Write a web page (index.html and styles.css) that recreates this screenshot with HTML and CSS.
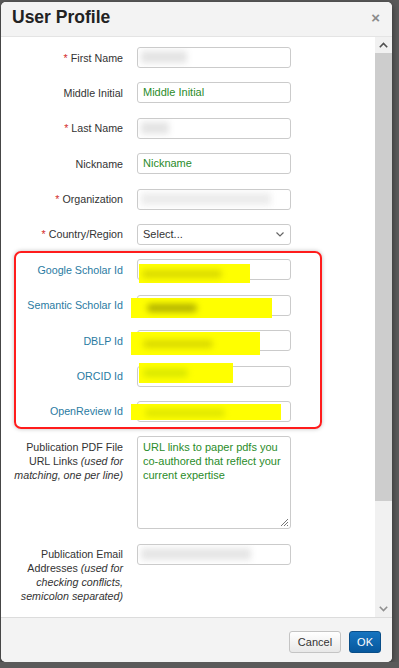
FILE: index.html
```html
<!DOCTYPE html>
<html>

<head>
    <meta charset="utf-8">
    <title>User Profile</title>
    <link rel="stylesheet" href="styles.css">
</head>

<body>
    <div class="backdrop">
        <div class="modal">
            <div class="modal-header">
                <h3 class="modal-title">User Profile</h3>
                <span class="close">&times;</span>
            </div>

            <div class="modal-body">
                <div class="scroll-content">
                    <form class="profile-form">
                        <div class="row">
                            <label class="req">First Name</label>
                            <div class="input"><span class="blur blur-first"></span></div>
                        </div>
                        <div class="row">
                            <label>Middle Initial</label>
                            <div class="input"><span class="hint">Middle Initial</span></div>
                        </div>
                        <div class="row">
                            <label class="req">Last Name</label>
                            <div class="input"><span class="blur blur-last"></span></div>
                        </div>
                        <div class="row">
                            <label>Nickname</label>
                            <div class="input"><span class="hint">Nickname</span></div>
                        </div>
                        <div class="row">
                            <label class="req">Organization</label>
                            <div class="input"><span class="blur blur-org"></span></div>
                        </div>
                        <div class="row">
                            <label class="req">Country/Region</label>
                            <div class="input select">
                                <span>Select...</span>
                                <svg class="caret" width="8" height="5" viewBox="0 0 8 5"><polyline points="0.5,0.5 4,4 7.5,0.5" fill="none" stroke="#666" stroke-width="1.2"/></svg>
                            </div>
                        </div>

                        <!-- ids, marked in red -->
                        <div class="id-group">
                            <div class="row">
                                <label class="ext">Google Scholar Id</label>
                                <div class="cell">
                                    <div class="input"></div>
                                    <span class="hl hl-google"><span class="hl-blur hl-blur-google"></span></span>
                                </div>
                            </div>
                            <div class="row">
                                <label class="ext">Semantic Scholar Id</label>
                                <div class="cell">
                                    <div class="input"></div>
                                    <span class="hl hl-semantic"><span class="hl-blur hl-blur-semantic"></span></span>
                                </div>
                            </div>
                            <div class="row">
                                <label class="ext">DBLP Id</label>
                                <div class="cell">
                                    <div class="input"></div>
                                    <span class="hl hl-dblp"><span class="hl-blur hl-blur-dblp"></span></span>
                                </div>
                            </div>
                            <div class="row">
                                <label class="ext">ORCID Id</label>
                                <div class="cell">
                                    <div class="input"></div>
                                    <span class="hl hl-orcid"><span class="hl-blur hl-blur-orcid"></span></span>
                                </div>
                            </div>
                            <div class="row">
                                <label class="ext">OpenReview Id</label>
                                <div class="cell">
                                    <div class="input"></div>
                                    <span class="hl hl-openreview"><span class="hl-blur hl-blur-openreview"></span></span>
                                </div>
                            </div>
                        </div>

                        <div class="row">
                            <label>Publication PDF File<br>URL Links <i>(used for</i><br><i>matching, one per line)</i></label>
                            <div class="input textarea">
                                <span class="hint">URL links to paper pdfs you co-authored that reflect your current expertise</span>
                                <svg class="grip" width="10" height="10" viewBox="0 0 10 10"><path d="M9 2 L2 9 M9 5 L5 9 M9 8 L8 9" stroke="#777" stroke-width="1"/></svg>
                            </div>
                        </div>
                        <div class="row">
                            <label>Publication Email<br>Addresses <i>(used for</i><br><i>checking conflicts,</i><br><i>semicolon separated)</i></label>
                            <div class="input"><span class="blur blur-email"></span></div>
                        </div>
                    </form>
                </div>

                <div class="scrollbar">
                    <div class="sb-arrow">
                        <svg width="9" height="6" viewBox="0 0 9 6"><polyline points="0.8,5.2 4.5,1.5 8.2,5.2" fill="none" stroke="#505050" stroke-width="1.6"/></svg>
                    </div>
                    <div class="sb-thumb"></div>
                    <div class="sb-track"></div>
                    <div class="sb-arrow">
                        <svg width="9" height="6" viewBox="0 0 9 6"><polyline points="0.8,0.8 4.5,4.5 8.2,0.8" fill="none" stroke="#909090" stroke-width="1.6"/></svg>
                    </div>
                </div>
            </div>

            <div class="modal-footer">
                <button class="btn" type="button">Cancel</button>
                <button class="btn btn-primary" type="button">OK</button>
            </div>
        </div>
    </div>
</body>

</html>
```

FILE: styles.css
```css
body {
    margin: 0;
    background: #5a5a5a;
    font-family: "Liberation Sans", Arial, sans-serif;
    font-size: 11px;
    color: #333;
}

.backdrop {
    padding: 2px 0 0 1px;
}

.modal {
    width: 391px;
    height: 660px;
    background: #fff;
    border-radius: 5px;
    box-shadow: 0 2px 6px rgba(0, 0, 0, 0.5);
    display: flex;
    flex-direction: column;
    overflow: hidden;
}

.modal-header {
    height: 34px;
    flex: none;
    background: #f3f3f3;
    border-bottom: 1px solid #e4e4e4;
    display: flex;
    align-items: center;
    justify-content: space-between;
    padding: 0 11px 0 11px;
}

.modal-title {
    margin: 0 0 3px 0;
    font-size: 17.5px;
    font-weight: bold;
    color: #222;
}

.close {
    font-size: 15px;
    font-weight: bold;
    color: #8a8a8a;
    margin: 0 1px 3px 0;
}

.modal-body {
    flex: 1;
    min-height: 0;
    display: flex;
}

.scroll-content {
    flex: 1;
    overflow: hidden;
    padding-top: 10px;
}

/* form rows */
.row {
    display: grid;
    grid-template-columns: 119px 154px;
    column-gap: 14px;
    align-items: start;
    padding-left: 3px;
    margin-bottom: 14.4px;
}

.row label {
    text-align: right;
    font-size: 10.7px;
    line-height: 14px;
    padding-top: 3.5px;
    color: #333;
}

.row label.req::before {
    content: "*";
    color: #d43030;
    margin-right: 3px;
}

.row label.ext {
    color: #2a7ba2;
}

.input {
    box-sizing: border-box;
    height: 21px;
    border: 1px solid #cbcbcb;
    border-radius: 3px;
    padding: 0 5px;
    line-height: 19px;
    background: #fff;
    overflow: hidden;
}

.hint {
    color: #2a8c2a;
}

.blur {
    display: inline-block;
    height: 12px;
    margin-top: 3px;
    margin-left: -2px;
    background: #e4e4e4;
    filter: blur(3px);
    vertical-align: top;
}

.blur-first { width: 46px; }
.blur-last { width: 28px; }
.blur-org { width: 130px; background: #ececec; }
.blur-email { width: 110px; background: #e6e6e6; }

.select {
    display: flex;
    justify-content: space-between;
    align-items: center;
    padding-right: 6px;
}

.textarea {
    position: relative;
    height: 93px;
    padding: 3px 5px;
    line-height: 14px;
}

.grip {
    position: absolute;
    right: 1px;
    bottom: 1px;
}

/* red box around the id rows */
.id-group {
    position: relative;
}

.id-group::before {
    content: "";
    position: absolute;
    left: 13px;
    top: -8px;
    bottom: -7px;
    width: 304px;
    border: 2px solid #ff1c1c;
    border-radius: 7px;
    box-shadow: 0 0 4px rgba(0, 0, 0, 0.25);
    pointer-events: none;
}

.cell {
    position: relative;
}

.hl {
    position: absolute;
    background: #ffff00;
    overflow: hidden;
}

.hl-blur {
    display: block;
    height: 8px;
    margin-top: 6px;
    background: #d9d900;
    filter: blur(3px);
    border-radius: 4px;
}

.hl-google { left: 2px; top: 5px; width: 111px; height: 19px; }
.hl-semantic { left: -6px; top: 3px; width: 141px; height: 20px; }
.hl-dblp { left: -6px; top: 2px; width: 129px; height: 23px; }
.hl-orcid { left: 2px; top: -3px; width: 94px; height: 20px; }
.hl-openreview { left: -6px; top: 3px; width: 150px; height: 16px; }

.hl-blur-google { width: 80px; margin-left: 3px; }
.hl-blur-semantic { width: 50px; margin-left: 16px; background: #b0b000; }
.hl-blur-dblp { width: 70px; margin-left: 12px; margin-top: 8px; }
.hl-blur-orcid { width: 45px; margin-left: 4px; background: #d8e600; }
.hl-blur-openreview { width: 80px; margin-left: 14px; margin-top: 5px; background: #dfe600; }

/* fake scrollbar */
.scrollbar {
    width: 17px;
    flex: none;
    display: flex;
    flex-direction: column;
    background: #f1f1f1;
}

.sb-arrow {
    height: 16px;
    flex: none;
    display: flex;
    align-items: center;
    justify-content: center;
}

.sb-thumb {
    height: 448px;
    background: #cdcdcd;
}

.sb-track {
    flex: 1;
}

.modal-footer {
    height: 45px;
    flex: none;
    box-sizing: border-box;
    border-top: 1px solid #dcdcdc;
    background: #f3f3f3;
    display: flex;
    justify-content: flex-end;
    align-items: flex-start;
    gap: 8px;
    padding: 13px 11px 0 0;
}

.btn {
    height: 22px;
    padding: 0 8px;
    font-family: "Liberation Sans", Arial, sans-serif;
    font-size: 11px;
    color: #333;
    background: linear-gradient(#ffffff, #e8e8e8);
    border: 1px solid #c4c4c4;
    border-radius: 3px;
}

.btn-primary {
    color: #fff;
    background: linear-gradient(#1674c0, #07589d);
    border-color: #0a4e88;
    padding: 0 7px;
}
```
